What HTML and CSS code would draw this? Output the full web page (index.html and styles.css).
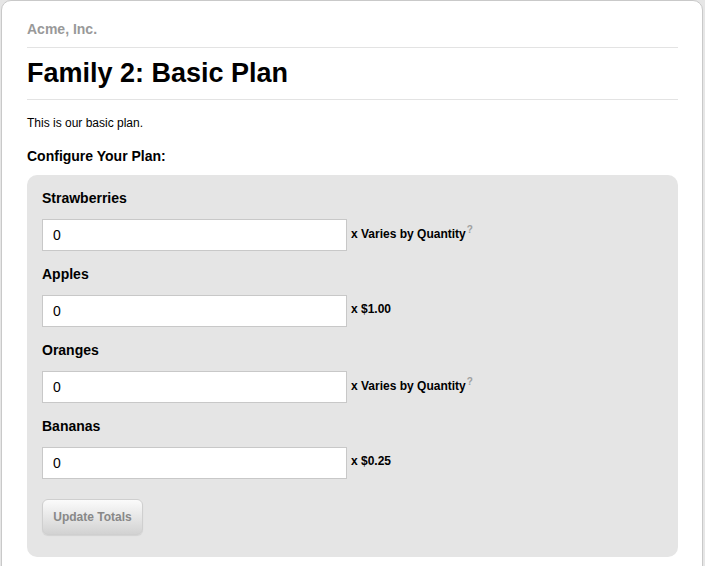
FILE: index.html
```html
<!DOCTYPE html>
<html lang="en">
<head>
<meta charset="utf-8">
<title>Family 2: Basic Plan</title>
<link rel="stylesheet" href="styles.css">
</head>
<body>
<div class="card">
  <div class="company">Acme, Inc.</div>
  <hr class="rule">
  <h1 class="title">Family 2: Basic Plan</h1>
  <hr class="rule">
  <p class="desc">This is our basic plan.</p>
  <h3 class="section">Configure Your Plan:</h3>
  <form class="config">
    <div class="item">
      <label class="item-label">Strawberries</label>
      <div class="item-row">
        <input class="qty" type="text" value="0">
        <span class="price">x Varies by Quantity<sup class="help">?</sup></span>
      </div>
    </div>
    <div class="item">
      <label class="item-label">Apples</label>
      <div class="item-row">
        <input class="qty" type="text" value="0">
        <span class="price">x $1.00</span>
      </div>
    </div>
    <div class="item">
      <label class="item-label">Oranges</label>
      <div class="item-row">
        <input class="qty" type="text" value="0">
        <span class="price">x Varies by Quantity<sup class="help">?</sup></span>
      </div>
    </div>
    <div class="item">
      <label class="item-label">Bananas</label>
      <div class="item-row">
        <input class="qty" type="text" value="0">
        <span class="price">x $0.25</span>
      </div>
    </div>
    <button class="update" type="button">Update Totals</button>
  </form>
</div>
</body>
</html>
```

FILE: styles.css
```css
html, body {
  margin: 0;
  padding: 0;
}
body {
  background: #e6e6e6;
  font-family: "Liberation Sans", Arial, Helvetica, sans-serif;
  color: #000;
}
.card {
  margin: 0 2px 0 1px;
  background: #fff;
  border: 1px solid #c9c9c9;
  border-radius: 10px;
  padding: 20px 24px 40px 25px;
  min-height: 600px;
}
.company {
  font-size: 14px;
  line-height: 17px;
  font-weight: bold;
  color: #999;
  margin-bottom: 9px;
}
.rule {
  margin: 0;
  border: 0;
  border-top: 1px solid #e3e3e3;
  height: 0;
}
.title {
  font-size: 27px;
  line-height: 32px;
  font-weight: bold;
  margin: 9px 0 10px;
}
.desc {
  font-size: 12px;
  line-height: 15px;
  margin: 16px 0 0;
}
.section {
  font-size: 14px;
  line-height: 17px;
  font-weight: bold;
  margin: 17px 0 10px;
}
.config {
  background: #e5e5e5;
  border-radius: 10px;
  padding: 15px 15px 22px;
}
.item {
  display: flex;
  flex-direction: column;
}
.item-label {
  font-size: 14px;
  line-height: 17px;
  font-weight: bold;
  margin-bottom: 12px;
}
.item-row {
  display: flex;
  align-items: flex-start;
  gap: 4px;
  margin-bottom: 15px;
}
.qty {
  box-sizing: border-box;
  width: 305px;
  height: 32px;
  margin: 0;
  border: 1px solid #c8c8c8;
  background: #fff;
  padding: 0 10px;
  font-family: "Liberation Sans", Arial, sans-serif;
  font-size: 14px;
  color: #000;
  outline: none;
}
.price {
  font-size: 12px;
  line-height: 14px;
  font-weight: bold;
  padding-top: 7px;
}
.help {
  font-size: 10px;
  line-height: 8px;
  font-weight: bold;
  color: #a0a0a0;
  margin-left: 1px;
  vertical-align: 5px;
}
.update {
  box-sizing: border-box;
  margin-top: 5px;
  width: 101px;
  height: 36px;
  border: 1px solid #cfcfcf;
  border-radius: 6px;
  background: linear-gradient(#fbfbfb, #d2d2d2);
  box-shadow: 0 1px 1px rgba(0,0,0,0.08);
  font-family: "Liberation Sans", Arial, sans-serif;
  font-size: 12px;
  font-weight: bold;
  color: #888;
  padding: 0;
}
```
